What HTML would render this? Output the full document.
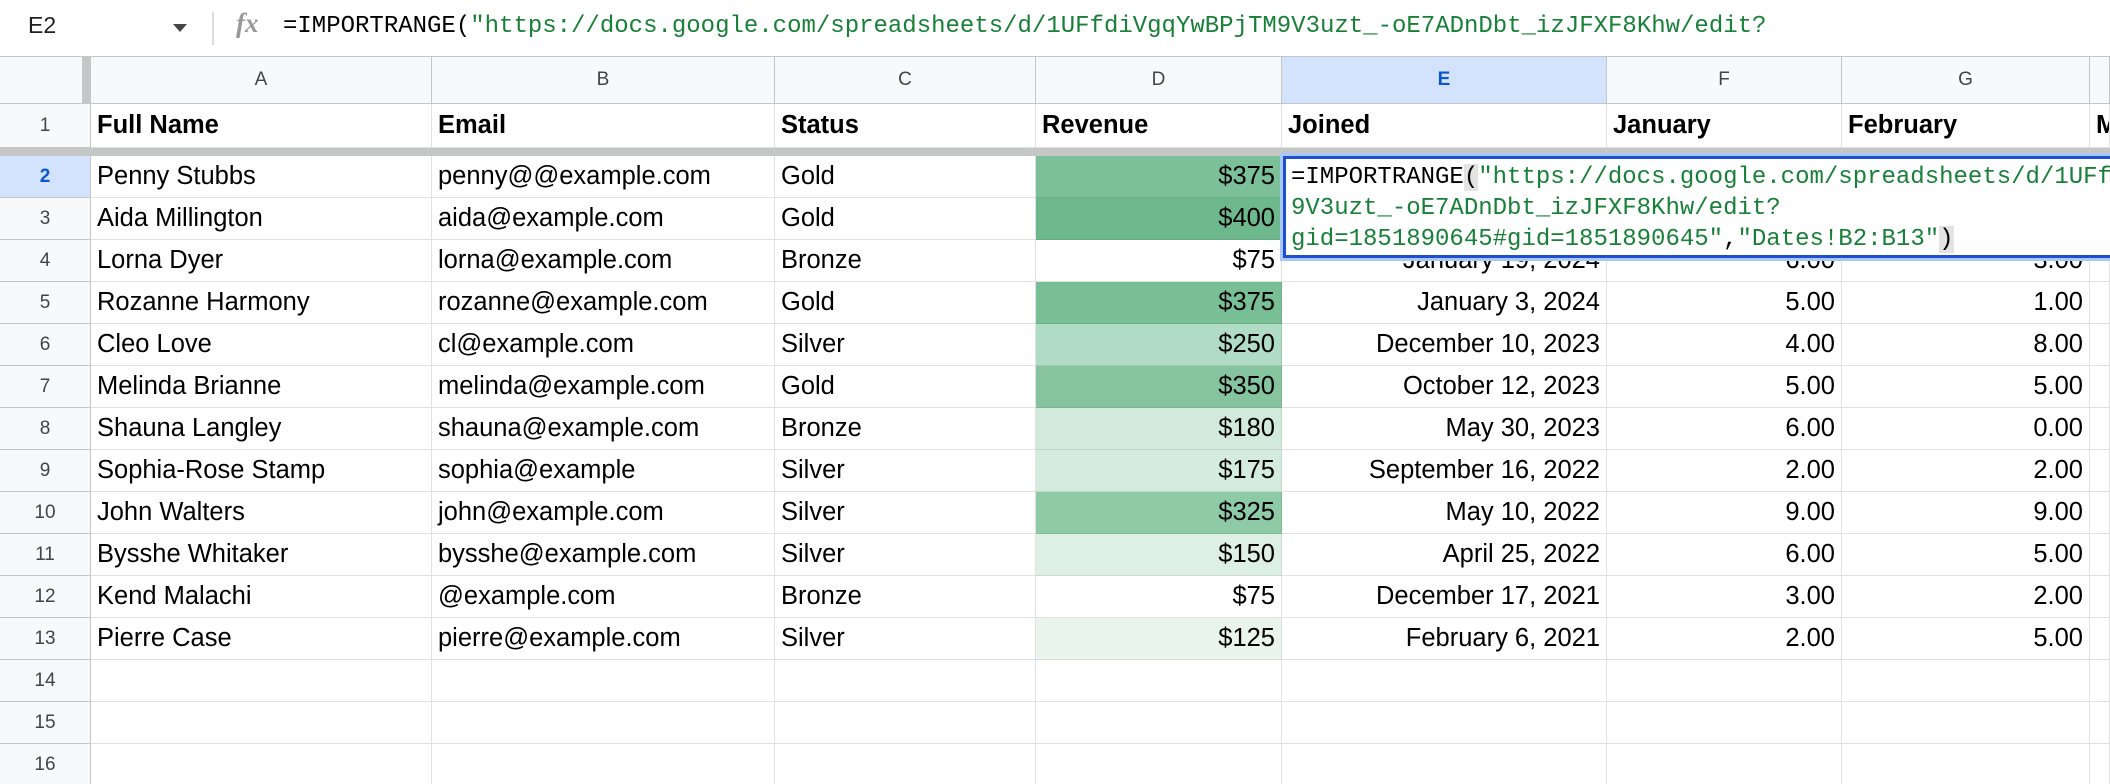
<!DOCTYPE html>
<html><head><meta charset="utf-8"><style>
html,body{margin:0;width:2110px;height:784px;overflow:hidden}
body{background:#fff;font-family:"Liberation Sans",Arial,sans-serif;position:relative}
.fb{position:absolute;left:0;top:0;width:2110px;height:56px;border-bottom:1px solid #c4c7c5;background:#fff}
.mono{font-family:"Liberation Mono",monospace}
.g{color:#188038}
.c{position:absolute;box-sizing:border-box;border-right:1px solid #e1e1e1;border-bottom:1px solid #e1e1e1;font-size:25.5px;color:#000;white-space:nowrap;overflow:hidden;line-height:41px;padding:0 6px}
.h{background:#f8f9fa;color:#444;font-size:19px;text-align:center;border-color:#c4c7c5}
.r{text-align:right}
.b{font-weight:bold}
</style></head><body>
<div class="fb">
 <div style="position:absolute;left:28px;top:12px;font-size:23px;color:#222">E2</div>
 <div style="position:absolute;left:173px;top:24px;width:0;height:0;border-left:7px solid transparent;border-right:7px solid transparent;border-top:8px solid #444"></div>
 <div style="position:absolute;left:212px;top:12px;width:2px;height:33px;background:#dadce0"></div>
 <div style="position:absolute;left:236px;top:8px;font-family:'Liberation Serif',serif;font-style:italic;font-weight:bold;font-size:27px;color:#999">fx</div>
 <div class="mono" style="position:absolute;left:283px;top:13px;font-size:24px;white-space:nowrap">=IMPORTRANGE(<span class="g">"https://docs.google.com/spreadsheets/d/1UFfdiVgqYwBPjTM9V3uzt_-oE7ADnDbt_izJFXF8Khw/edit?</span></div>
</div>
<div id="g"></div>
<script>
var cols=[0,91,432,775,1036,1282,1607,1842,2090,2110];
var letters=["","A","B","C","D","E","F","G",""];
var H='';
function cell(x,y,w,h,cls,txt,st){H+='<div class="c '+cls+'" style="left:'+x+'px;top:'+y+'px;width:'+w+'px;height:'+h+'px;'+(st||'')+'">'+txt+'</div>';}
for(var i=0;i<9;i++){var x=cols[i],w=cols[i+1]-cols[i];
 var st=i==5?'background:#d3e3fd;color:#0b57d0;font-weight:bold;':'';
 cell(x,57,w,47,'h',letters[i],'line-height:46px;'+st);}
H+='<div style="position:absolute;left:82px;top:57px;width:9px;height:47px;background:#c4c7c5"></div>';
var data=[
["Full Name","Email","Status","Revenue","Joined","January","February","March"],
["Penny Stubbs","penny@@example.com","Gold","$375","","","",""],
["Aida Millington","aida@example.com","Gold","$400","","","",""],
["Lorna Dyer","lorna@example.com","Bronze","$75","January 19, 2024","6.00","3.00",""],
["Rozanne Harmony","rozanne@example.com","Gold","$375","January 3, 2024","5.00","1.00",""],
["Cleo Love","cl@example.com","Silver","$250","December 10, 2023","4.00","8.00",""],
["Melinda Brianne","melinda@example.com","Gold","$350","October 12, 2023","5.00","5.00",""],
["Shauna Langley","shauna@example.com","Bronze","$180","May 30, 2023","6.00","0.00",""],
["Sophia-Rose Stamp","sophia@example","Silver","$175","September 16, 2022","2.00","2.00",""],
["John Walters","john@example.com","Silver","$325","May 10, 2022","9.00","9.00",""],
["Bysshe Whitaker","bysshe@example.com","Silver","$150","April 25, 2022","6.00","5.00",""],
["Kend Malachi","@example.com","Bronze","$75","December 17, 2021","3.00","2.00",""],
["Pierre Case","pierre@example.com","Silver","$125","February 6, 2021","2.00","5.00",""],
["","","","","","","",""],["","","","","","","",""],["","","","","","","",""]];
var rev=["","#7bc098","#6db88d","#fff","#79bf95","#b0dbc5","#85c49e","#d2eadc","#d4ebdf","#8ecaa5","#deefe5","#fff","#e9f4ed"];
for(var r=0;r<16;r++){
 var y=r==0?104:156+(r-1)*42, h=r==0?44:42;
 var hst=r==1?'background:#d3e3fd;color:#0b57d0;font-weight:bold;':'';
 cell(0,y,91,h,'h',r+1,'line-height:'+(h-1)+'px;'+hst);
 for(var c=0;c<8;c++){var x=cols[c+1],w=cols[c+2]-cols[c+1];
  var cls=(r==0?'b':(c>=3?'r':''));
  var st='line-height:'+(h-1)+'px;';
  if(c==3&&r>0&&r<13&&rev[r]!='#fff')st+='background:'+rev[r]+';border-right-color:rgba(0,0,0,.08);border-bottom-color:rgba(0,0,0,.08);';
  cell(x,y,w,h,cls,data[r][c],st);}
}
H+='<div style="position:absolute;left:0;top:148px;width:2110px;height:8px;background:#c4c7c5"></div>';
document.getElementById('g').innerHTML=H;
</script>
<div style="position:absolute;left:1280px;top:153px;width:830px;height:108px;background:#a8c7fa"></div>
<div class="mono" style="position:absolute;left:1283px;top:156px;width:827px;height:102px;box-sizing:border-box;border:3px solid #1f4fd1;border-right:none;background:#fff;font-size:24px;line-height:31px;padding:3px 0 0 5px;white-space:nowrap;overflow:hidden">=IMPORTRANGE<span style="background:#e3e3e3">(</span><span class="g">"https://docs.google.com/spreadsheets/d/1UFfdiVgqYwBPjTM</span><br><span class="g">9V3uzt_-oE7ADnDbt_izJFXF8Khw/edit?</span><br><span class="g">gid=1851890645#gid=1851890645"</span>,<span class="g">"Dates!B2:B13"</span><span style="background:#e3e3e3">)</span></div>
</body></html>
